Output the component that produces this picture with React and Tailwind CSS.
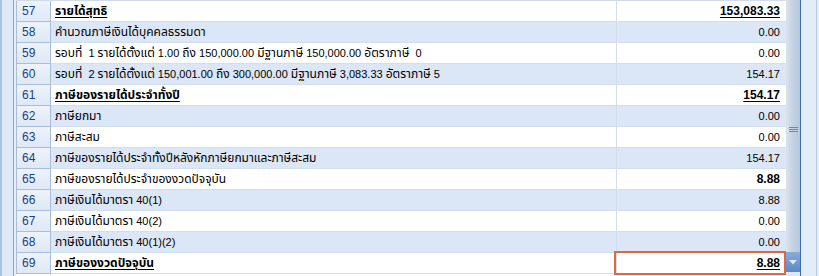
import React from "react";

const rows = [
  { n: 57, label: "รายได้สุทธิ", value: "153,083.33", bl: true, bv: true },
  { n: 58, label: "คำนวณภาษีเงินได้บุคคลธรรมดา", value: "0.00" },
  { n: 59, label: "รอบที่  1 รายได้ตั้งแต่ 1.00 ถึง 150,000.00 มีฐานภาษี 150,000.00 อัตราภาษี  0", value: "0.00" },
  { n: 60, label: "รอบที่  2 รายได้ตั้งแต่ 150,001.00 ถึง 300,000.00 มีฐานภาษี 3,083.33 อัตราภาษี 5", value: "154.17" },
  { n: 61, label: "ภาษีของรายได้ประจำทั้งปี", value: "154.17", bl: true, bv: true },
  { n: 62, label: "ภาษียกมา", value: "0.00" },
  { n: 63, label: "ภาษีสะสม", value: "0.00" },
  { n: 64, label: "ภาษีของรายได้ประจำทั้งปีหลังหักภาษียกมาและภาษีสะสม", value: "154.17" },
  { n: 65, label: "ภาษีของรายได้ประจำของงวดปัจจุบัน", value: "8.88", boldOnly: true },
  { n: 66, label: "ภาษีเงินได้มาตรา 40(1)", value: "8.88" },
  { n: 67, label: "ภาษีเงินได้มาตรา 40(2)", value: "0.00" },
  { n: 68, label: "ภาษีเงินได้มาตรา 40(1)(2)", value: "0.00" },
  { n: 69, label: "ภาษีของงวดปัจจุบัน", value: "8.88", bl: true, bv: true, sel: true },
];

function Mixed({ text }) {
  const parts = text.split(/([\u0E00-\u0E7F]+)/);
  return parts.map((p, i) =>
    /[\u0E00-\u0E7F]/.test(p) ? (
      <span key={i} className="text-[12px]">{p}</span>
    ) : (
      <span key={i} className="text-[11px]">{p}</span>
    )
  );
}

export default function App() {
  return (
    <div
      className="flex h-[276px] w-[819px] overflow-hidden bg-[#dfe8f5] text-[11px] text-black"
      style={{ fontFamily: "'Liberation Sans', 'Noto Sans Thai', sans-serif" }}
    >
      {/* left frame */}
      <div className="flex h-full w-[16px] shrink-0">
        <div className="h-full w-[2px] bg-[#a8c2e6]" />
        <div className="h-full w-[11px] bg-[#dfe8f5]" />
        <div className="h-full w-[1px] bg-[#8aa6cc]" />
        <div className="h-full w-[2px] bg-[#e6eefa]" />
      </div>

      {/* grid */}
      <div className="flex h-full w-[770px] shrink-0 flex-col border-t border-[#d0dcec] bg-white">
        {rows.map((r, i) => {
          const bg = i % 2 === 1 ? "bg-[#dbe6f6]" : "bg-white";
          return (
            <div key={r.n} className="flex h-[21px] shrink-0">
              <div className="flex h-full w-[35px] shrink-0 items-center border-b border-l border-r border-[#a6bedc] bg-gradient-to-b from-[#eef3fb] to-[#dfe8f6] pl-[5px] text-[12px] text-[#15428b]">
                {r.n}
              </div>
              <div className={`flex h-full w-[566px] shrink-0 items-center border-b border-r border-[#d3deed] pl-[4px] ${bg}`}>
                <span className={`whitespace-pre ${r.bl ? "font-bold underline underline-offset-2" : ""}`}>
                  <Mixed text={r.label} />
                </span>
              </div>
              <div className={`relative flex h-full w-[169px] shrink-0 items-center justify-end border-b border-[#d3deed] pr-[6px] ${bg}`}>
                <span className={r.bv ? "text-[12px] font-bold underline underline-offset-2" : r.boldOnly ? "text-[12px] font-bold" : "text-[11px]"}>{r.value}</span>
                {r.sel && (
                  <div className="pointer-events-none absolute -bottom-[2px] -left-[3px] -top-[2px] right-0 border-2 border-[#e0673f]" />
                )}
              </div>
            </div>
          );
        })}
      </div>

      {/* scrollbar */}
      <div className="flex h-full w-[14px] shrink-0 flex-col bg-[#e4ebf5]">
        <div className="flex h-[252px] shrink-0 flex-col items-center justify-center gap-[1px] bg-gradient-to-r from-[#dbe3ee] via-[#c3d1e4] to-[#b7c7dd] pt-[6px]">
          <div className="h-[1px] w-[9px] bg-[#6f89ad]" />
          <div className="h-[1px] w-[9px] bg-[#6f89ad]" />
          <div className="h-[1px] w-[9px] bg-[#6f89ad]" />
        </div>
        <div className="flex h-[20px] shrink-0 items-center justify-center bg-gradient-to-b from-[#89abdc] to-[#5c88c7]">
          <svg width="8" height="5" viewBox="0 0 8 5">
            <path d="M0 0 L8 0 L4 4.5 Z" fill="#dfe9f8" />
          </svg>
        </div>
        <div className="flex-1 bg-[#dfe8f5]" />
      </div>

      {/* right frame */}
      <div className="flex h-full flex-1">
        <div className="h-full w-[1px] bg-[#3f6aa8]" />
        <div className="h-full w-[15px] bg-[#e3ecf9]" />
        <div className="h-full w-[1px] bg-[#b8cbe6]" />
        <div className="h-full flex-1 bg-[#e3ecf9]" />
      </div>
    </div>
  );
}
